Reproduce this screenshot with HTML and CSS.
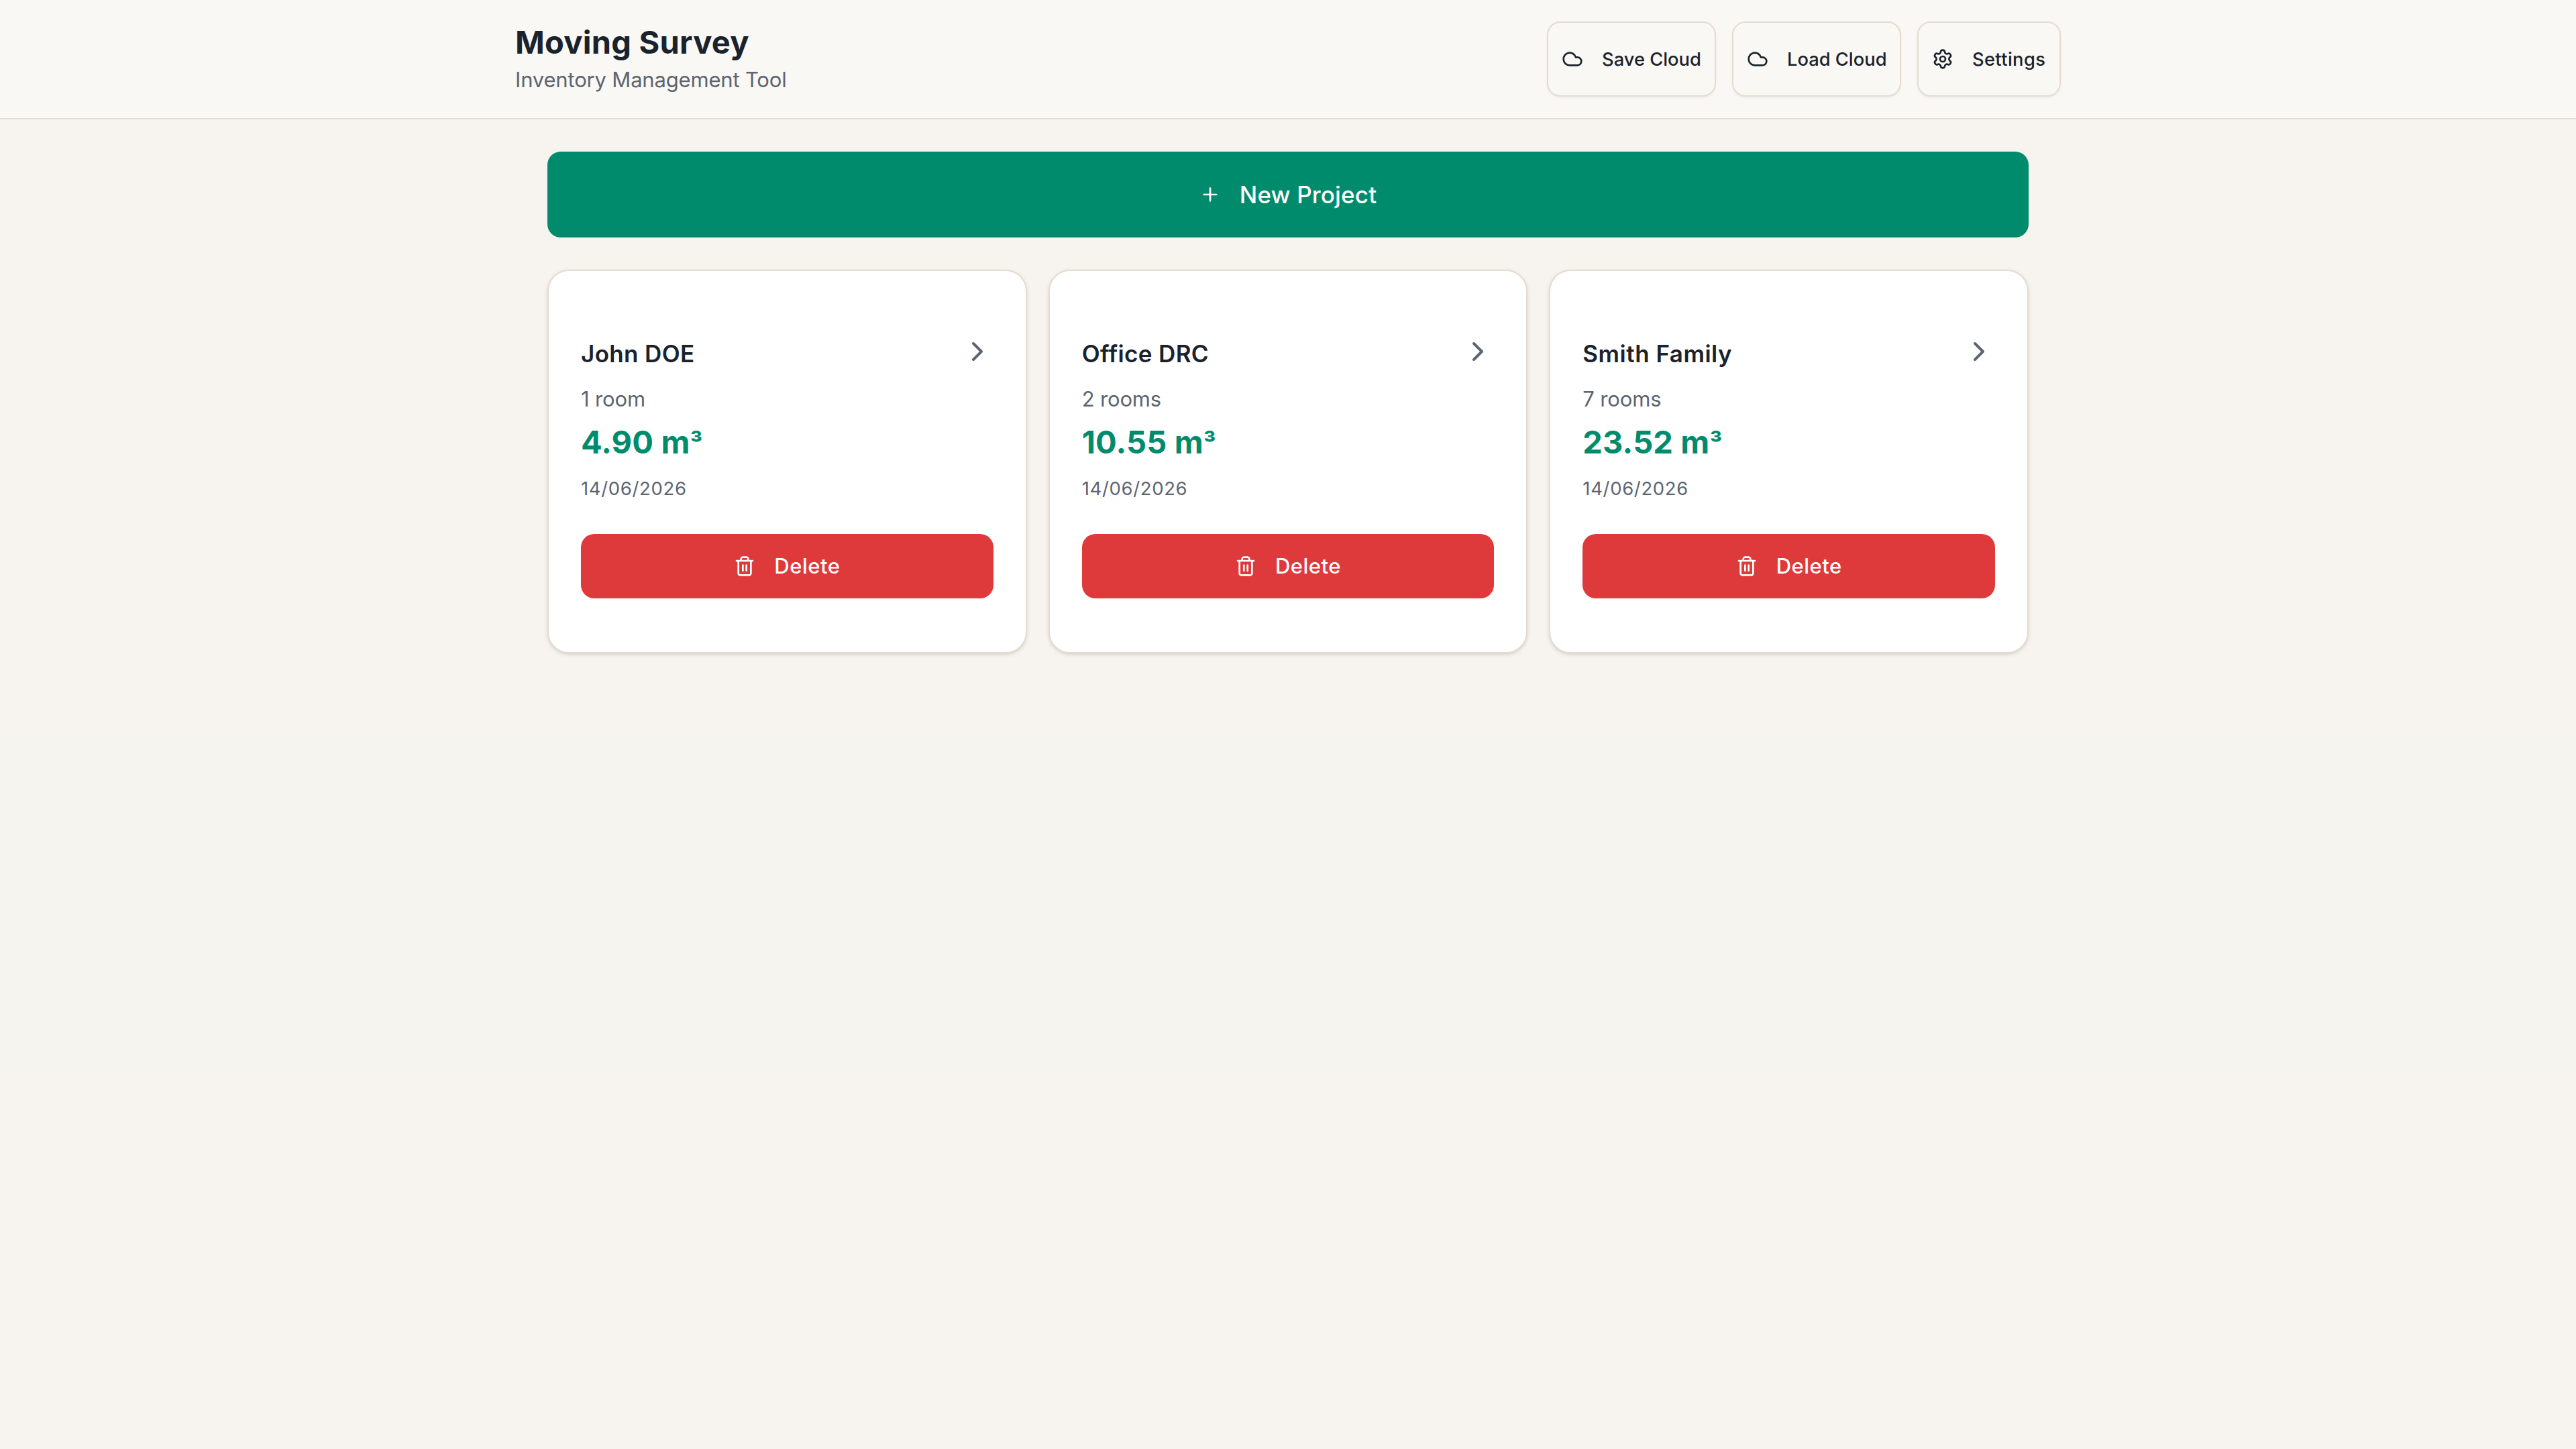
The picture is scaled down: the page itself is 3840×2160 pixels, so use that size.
FILE: index.html
```html
<!DOCTYPE html>
<html lang="en">
<head>
<meta charset="utf-8">
<title>Moving Survey</title>
<link rel="stylesheet" href="styles.css">
</head>
<body>
<svg class="sprite" aria-hidden="true">
  <symbol id="cloud" viewBox="0 0 24 24"><path d="M17.5 19H9a7 7 0 1 1 6.71-9h1.79a4.5 4.5 0 1 1 0 9Z"/></symbol>
  <symbol id="gear" viewBox="0 0 24 24"><path d="M9.671 4.136a2.34 2.34 0 0 1 4.659 0 2.34 2.34 0 0 0 3.319 1.915 2.34 2.34 0 0 1 2.33 4.033 2.34 2.34 0 0 0 0 3.831 2.34 2.34 0 0 1-2.33 4.033 2.34 2.34 0 0 0-3.319 1.915 2.34 2.34 0 0 1-4.659 0 2.34 2.34 0 0 0-3.32-1.915 2.34 2.34 0 0 1-2.33-4.033 2.34 2.34 0 0 0 0-3.831A2.34 2.34 0 0 1 6.35 6.051a2.34 2.34 0 0 0 3.319-1.915"/><circle cx="12" cy="12" r="3"/></symbol>
  <symbol id="plus" viewBox="0 0 24 24"><path d="M5 12h14M12 5v14"/></symbol>
  <symbol id="chevron" viewBox="0 0 24 24"><path d="m9 18 6-6-6-6"/></symbol>
  <symbol id="trash" viewBox="0 0 24 24"><path d="M3 6h18M19 6v14c0 1-1 2-2 2H7c-1 0-2-1-2-2V6M8 6V4c0-1 1-2 2-2h4c1 0 2 1 2 2v2M10 11v6M14 11v6"/></symbol>
</svg>
<header class="header">
  <div class="header-inner">
    <div class="brand">
      <h1 class="title">Moving Survey</h1>
      <p class="subtitle">Inventory Management Tool</p>
    </div>
    <nav class="actions">
      <button class="btn btn-cloud"><svg class="icon"><use href="#cloud"/></svg><span>Save Cloud</span></button>
      <button class="btn btn-cloud"><svg class="icon"><use href="#cloud"/></svg><span>Load Cloud</span></button>
      <button class="btn btn-settings"><svg class="icon"><use href="#gear"/></svg><span>Settings</span></button>
    </nav>
  </div>
</header>
<main class="main">
  <button class="new-project"><svg class="icon"><use href="#plus"/></svg><span>New Project</span></button>
  <section class="grid">
    <article class="card">
      <div class="card-head"><h2 class="name">John DOE</h2><svg class="chevron"><use href="#chevron"/></svg></div>
      <p class="rooms">1 room</p>
      <p class="volume">4.90 m<span class="cube">³</span></p>
      <p class="date">14/06/2026</p>
      <button class="delete"><svg class="icon"><use href="#trash"/></svg><span>Delete</span></button>
    </article>
    <article class="card">
      <div class="card-head"><h2 class="name">Office DRC</h2><svg class="chevron"><use href="#chevron"/></svg></div>
      <p class="rooms">2 rooms</p>
      <p class="volume">10.55 m<span class="cube">³</span></p>
      <p class="date">14/06/2026</p>
      <button class="delete"><svg class="icon"><use href="#trash"/></svg><span>Delete</span></button>
    </article>
    <article class="card">
      <div class="card-head"><h2 class="name name-wide">Smith Family</h2><svg class="chevron"><use href="#chevron"/></svg></div>
      <p class="rooms">7 rooms</p>
      <p class="volume">23.52 m<span class="cube">³</span></p>
      <p class="date">14/06/2026</p>
      <button class="delete"><svg class="icon"><use href="#trash"/></svg><span>Delete</span></button>
    </article>
  </section>
</main>
</body>
</html>
```
FILE: styles.css
```css
* { box-sizing: border-box; margin: 0; }

body {
  min-height: 2160px;
  background: linear-gradient(#f7f3ee 50%, #f6f4ef 50%, #f6f4ef 75%, #f7f3ee 75%);
  color: #1a222c;
  font-family: Inter, "Liberation Sans", sans-serif;
}

button {
  font: inherit;
  color: inherit;
  border: 0;
  white-space: nowrap;
}

.sprite { display: none; }

.icon, .chevron {
  fill: none;
  stroke: currentColor;
  stroke-width: 2;
  stroke-linecap: round;
  stroke-linejoin: round;
  flex: none;
}

.icon { width: 32px; height: 32px; }

.header {
  height: 178px;
  background: #faf8f4;
  border-bottom: 2px solid #e4dccf;
}

.header-inner {
  width: 2304px;
  height: 176px;
  margin: 0 auto;
  display: flex;
  justify-content: space-between;
  align-items: center;
}

.brand { height: 120px; padding-top: 3px; }

.title {
  font-size: 47px;
  line-height: 64px;
  font-weight: 700;
  letter-spacing: 0.25px;
}

.subtitle {
  font-size: 31px;
  line-height: 48px;
  color: #5c6570;
  letter-spacing: -0.18px;
}

.actions { display: flex; gap: 24px; }

.btn {
  height: 112px;
  padding: 0 20px;
  display: flex;
  align-items: center;
  gap: 28px;
  background: #faf8f4;
  border: 2px solid #e4dccf;
  border-radius: 20px;
  box-shadow: 0 2px 4px rgba(0, 0, 0, 0.05);
  font-size: 27.3px;
  font-weight: 500;
}

.btn-cloud { width: 252px; }
.btn-settings { width: 214px; letter-spacing: 0.35px; }

.main {
  width: 2208px;
  margin: 0 auto;
  padding-top: 48px;
}

.new-project {
  width: 100%;
  height: 128px;
  display: flex;
  align-items: center;
  justify-content: center;
  gap: 28px;
  background: #008c6c;
  color: #fff;
  border-radius: 20px;
  font-size: 35px;
  font-weight: 500;
  letter-spacing: 0.15px;
}

.grid {
  margin-top: 48px;
  display: grid;
  grid-template-columns: repeat(3, 1fr);
  gap: 32px;
}

.card {
  height: 572px;
  padding: 96px 48px 0;
  background: #fff;
  border: 2px solid #e4dccf;
  border-radius: 32px;
  box-shadow: 0 2px 6px rgba(0, 0, 0, 0.1), 0 2px 4px -2px rgba(0, 0, 0, 0.1);
}

.card-head {
  height: 56px;
  display: flex;
  justify-content: space-between;
}

.name {
  font-size: 35px;
  line-height: 54px;
  font-weight: 600;
  letter-spacing: 0.35px;
}

.name-wide { letter-spacing: 0.5px; }

.chevron {
  width: 48px;
  height: 48px;
  color: #5c6570;
}

.rooms {
  margin-top: 15px;
  font-size: 31px;
  line-height: 48px;
  color: #5c6570;
  letter-spacing: -0.15px;
}

.volume {
  margin-top: 8px;
  font-size: 47px;
  line-height: 64px;
  font-weight: 700;
  color: #008c6c;
  letter-spacing: 0.15px;
}

.cube { font-size: 40px; line-height: 1; }

.date {
  margin-top: 17px;
  font-size: 27.5px;
  line-height: 40px;
  color: #5c6570;
  letter-spacing: 0.65px;
}

.delete {
  width: 100%;
  height: 96px;
  margin-top: 48px;
  display: flex;
  align-items: center;
  justify-content: center;
  gap: 28px;
  background: #df3a3b;
  color: #fff;
  border-radius: 20px;
  font-size: 31px;
  font-weight: 500;
  letter-spacing: 0.5px;
}

.delete span { padding-bottom: 2px; }
```
